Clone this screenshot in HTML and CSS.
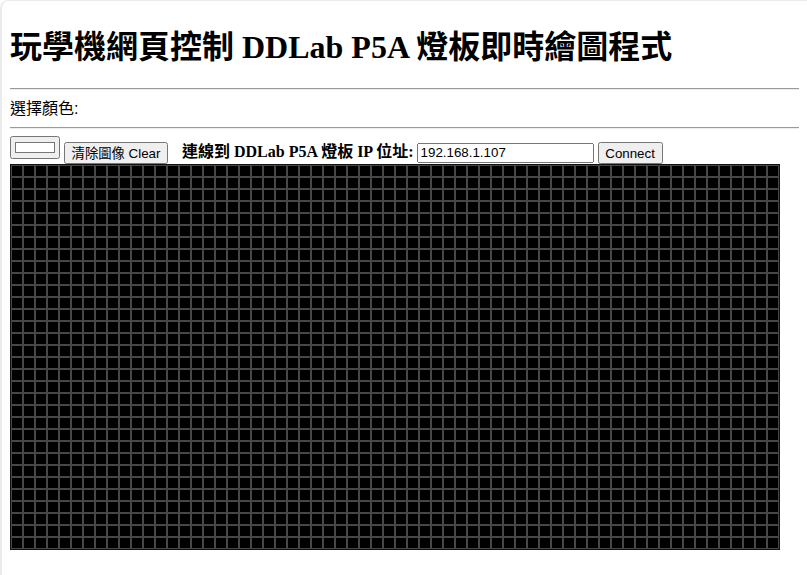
FILE: index.html
```html
<!DOCTYPE html>
<html lang="zh-Hant">
<head>
<meta charset="utf-8">
<title>DDLab P5A</title>
<link rel="stylesheet" href="styles.css">
</head>
<body>
<h1 class="title">玩學機網頁控制 DDLab P5A 燈板即時繪圖程式</h1>
<hr class="rule">
<div class="color-label">選擇顏色:</div>
<hr class="rule">
<div class="controls">
<input class="picker" type="color" value="#ffffff">
<button class="btn btn-clear">清除圖像 Clear</button>
<b class="ip-label">連線到 DDLab P5A 燈板 IP 位址:</b>
<input class="ip" type="text" value="192.168.1.107">
<button class="btn btn-connect">Connect</button>
</div>
<div class="matrix"></div>
</body>
</html>
```

FILE: styles.css
```css
html {
  background: #ffffff;
}
body {
  margin: 0;
  box-sizing: border-box;
  min-height: 100vh;
  border-left: 2px solid #ebebeb;
  border-top: 1px solid #ebebeb;
  border-top-left-radius: 8px;
  padding: 7px 8px 8px 8px;
  font-family: "Liberation Serif", "Noto Sans CJK TC", serif;
  font-size: 16px;
  color: #000;
}
.title {
  font-size: 32px;
  line-height: 37px;
  font-weight: bold;
  margin: 21.44px 0;
}
.rule {
  margin: 8px 0;
  border: 0;
  border-top: 1px solid #9a9a9a;
  border-bottom: 1px solid #eeeeee;
}
.color-label {
  font-family: "Liberation Sans", "Noto Sans CJK TC", sans-serif;
  font-size: 16px;
  line-height: 21px;
}
.controls {
  display: flex;
  align-items: flex-end;
  height: 27px;
}
.picker {
  width: 50px;
  height: 23px;
  margin: 0 4px 5px 0;
  padding: 1px 2px;
  box-sizing: border-box;
}
.btn {
  font-family: "Liberation Sans", "Noto Sans CJK TC", sans-serif;
  font-size: 13.33px;
  line-height: 16px;
  height: 22px;
  box-sizing: border-box;
  padding: 2px 4px;
  margin: 0;
  white-space: nowrap;
}
.btn-clear {
  width: 104px;
}
.btn-connect {
  width: 65px;
}
.ip-label {
  margin: 0 3px 2px 14px;
  line-height: 20px;
  white-space: nowrap;
}
.ip {
  font-family: "Liberation Sans", sans-serif;
  font-size: 13.33px;
  width: 177px;
  height: 20px;
  box-sizing: border-box;
  margin: 0 4px 1px 0;
}
.matrix {
  width: 768px;
  height: 384px;
  border: 1px solid #111;
  background-color: #000;
  background-image:
    linear-gradient(to right, #474747 2px, transparent 2px),
    linear-gradient(to bottom, #474747 2px, transparent 2px);
  background-size: 12px 12px;
  background-position: -1px -1px;
}
```
